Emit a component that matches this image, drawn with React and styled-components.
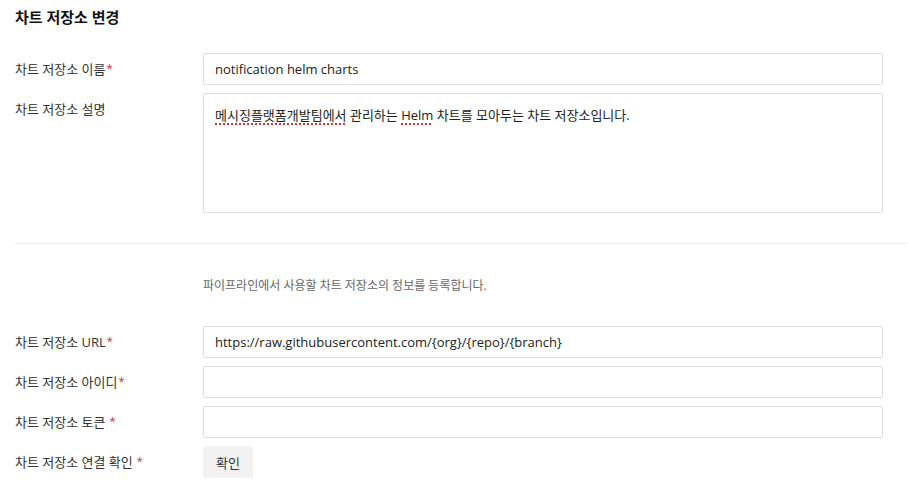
import styled, { createGlobalStyle } from "styled-components";

const GlobalStyle = createGlobalStyle`
  body {
    margin: 0;
    background: #fff;
    font-family: "Open Sans", "Noto Sans CJK KR", sans-serif;
    color: #222;
  }
`;

const Page = styled.div`
  padding: 6px 26px 0 15px;
`;

const Title = styled.h2`
  margin: 0 0 25px;
  font-size: 15px;
  font-weight: 700;
  line-height: 22px;
  color: #111;
`;

const Form = styled.div`
  display: flex;
  flex-direction: column;
  gap: 8px;
`;

const Row = styled.div`
  display: grid;
  grid-template-columns: 188px 1fr;
  align-items: start;
`;

const Label = styled.label`
  height: 32px;
  font-size: 13px;
  line-height: 32px;
  color: #333;
  white-space: nowrap;
`;

const Req = styled.span`
  color: #e0201c;
  font-size: 11px;
  line-height: 0;
  vertical-align: 2px;
  margin-left: ${(p) => (p.$spaced ? "4px" : "1px")};
`;

const Input = styled.input`
  box-sizing: border-box;
  width: 100%;
  height: 32px;
  padding: 0 11px;
  border: 1px solid #dcdcdc;
  border-radius: 2px;
  font: inherit;
  font-size: 13px;
  color: #222;
  outline: none;
`;

const TextBox = styled.div`
  box-sizing: border-box;
  width: 100%;
  height: 120px;
  padding: 11px 11px;
  border: 1px solid #dcdcdc;
  border-radius: 2px;
  font-size: 13px;
  line-height: 20px;
  color: #222;
`;

const Spell = styled.span`
  text-decoration: underline dotted #e03030;
  text-underline-offset: 3px;
  text-decoration-thickness: 1.5px;
`;

const Divider = styled.hr`
  border: 0;
  border-top: 1px solid #ececec;
  margin: 30px -24px 0 0;
`;

const Helper = styled.p`
  margin: 33px 0 31px 188px;
  font-size: 12px;
  line-height: 18px;
  color: #666;
`;

const Button = styled.button`
  display: block;
  width: 50px;
  height: 32px;
  border: 0;
  border-radius: 2px;
  background: #f2f2f2;
  font: inherit;
  font-size: 13px;
  color: #333;
  cursor: pointer;
`;

export default function App() {
  return (
    <Page>
      <GlobalStyle />
      <Title>차트 저장소 변경</Title>
      <Form>
        <Row>
          <Label>
            차트 저장소 이름<Req>*</Req>
          </Label>
          <Input defaultValue="notification helm charts" />
        </Row>
        <Row>
          <Label>차트 저장소 설명</Label>
          <TextBox>
            <Spell>메시징플랫폼개발팀에서</Spell> 관리하는 <Spell>Helm</Spell> 차트를
            모아두는 차트 저장소입니다.
          </TextBox>
        </Row>
      </Form>
      <Divider />
      <Helper>파이프라인에서 사용할 차트 저장소의 정보를 등록합니다.</Helper>
      <Form>
        <Row>
          <Label>
            차트 저장소 URL<Req>*</Req>
          </Label>
          <Input defaultValue="https://raw.githubusercontent.com/{org}/{repo}/{branch}" />
        </Row>
        <Row>
          <Label>
            차트 저장소 아이디<Req>*</Req>
          </Label>
          <Input />
        </Row>
        <Row>
          <Label>
            차트 저장소 토큰<Req $spaced>*</Req>
          </Label>
          <Input />
        </Row>
        <Row>
          <Label>
            차트 저장소 연결 확인<Req $spaced>*</Req>
          </Label>
          <Button>확인</Button>
        </Row>
      </Form>
    </Page>
  );
}
